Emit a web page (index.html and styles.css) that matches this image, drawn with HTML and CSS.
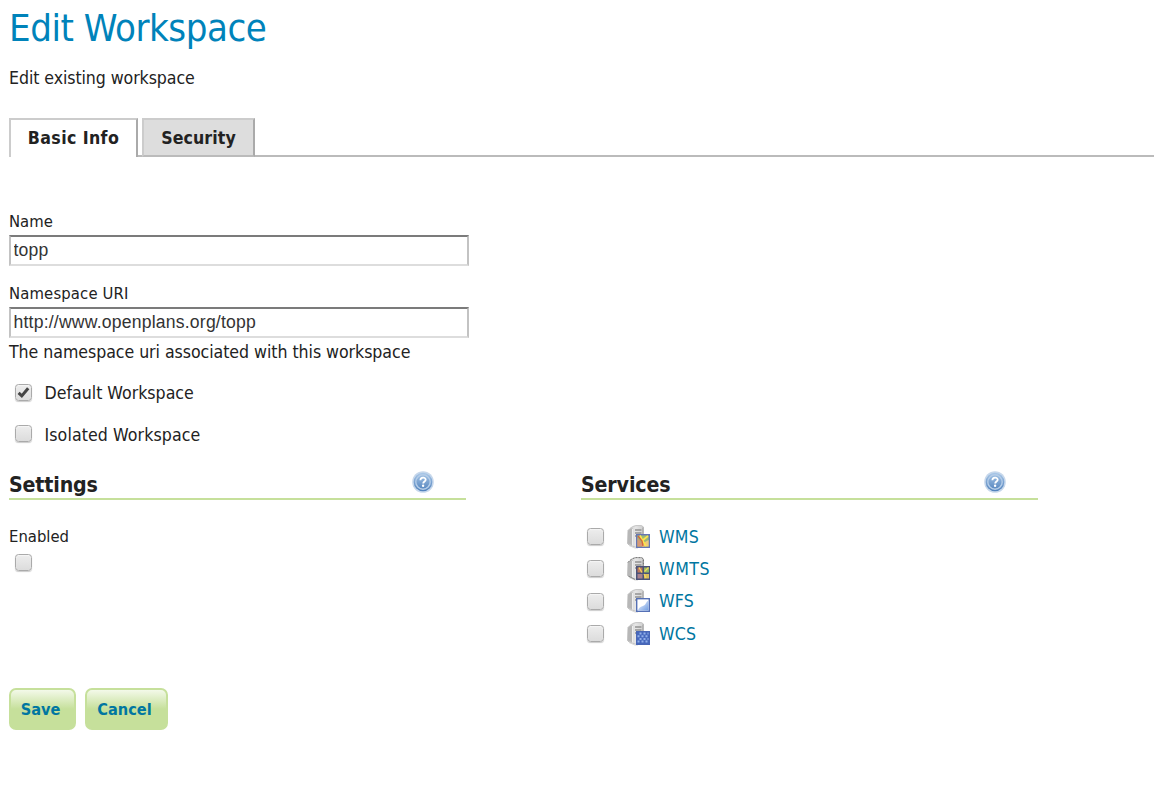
FILE: index.html
```html
<!DOCTYPE html>
<html lang="en">
<head>
<meta charset="utf-8">
<title>Edit Workspace</title>
<link rel="stylesheet" href="styles.css">
</head>
<body>
<svg class="defs" width="0" height="0" aria-hidden="true">
  <defs>
    <linearGradient id="blue" x1="0" y1="0" x2="0" y2="1"><stop offset="0" stop-color="#a9c8e8"/><stop offset="1" stop-color="#4f80bb"/></linearGradient>
    <linearGradient id="metal" x1="0" y1="0" x2="1" y2="0"><stop offset="0" stop-color="#c6c6c6"/><stop offset=".5" stop-color="#e6e6e6"/><stop offset="1" stop-color="#cfcfcf"/></linearGradient>
    <linearGradient id="sky" x1="0" y1="0" x2="1" y2="1"><stop offset=".2" stop-color="#dce8fb"/><stop offset="1" stop-color="#6f9be0"/></linearGradient>
    <symbol id="help" viewBox="0 0 22 22">
      <circle cx="11" cy="11" r="10.8" fill="#c6d7eb"/>
      <circle cx="11" cy="11" r="9.3" fill="url(#blue)"/>
      <circle cx="11" cy="11" r="7.2" fill="none" stroke="#b5cde8" stroke-width="1.4"/>
      <path d="M8.4 9.3c0-3.5 5.300-3.5 5.300-.5 0 1.800-2.500 1.800-2.500 3.700" fill="none" stroke="#fff" stroke-width="1.8"/>
      <circle cx="11.1" cy="14.8" r="1.2" fill="#fff"/>
    </symbol>
    <symbol id="server" viewBox="0 0 24 24">
      <path d="M1 5.500C3 3 6 1 9 .6h5.500L16.500 2v17l-7 3.500-7.500-2.500-1.500-1.500z" fill="url(#metal)" stroke="#b9b9b9" stroke-width=".8"/>
      <path d="M1 6C2 4.500 3.500 3.500 5.500 3v17.500L1 18.500z" fill="#b7b7b7"/>
      <path d="M5.500 4v16.500" stroke="#eee" stroke-width="1"/>
      <path d="M8 5h6.500M8 8h6.500M8 11h3" stroke="#929292" stroke-width="1.3"/>
      <path d="M15.800 2.500V10" stroke="#a6a6a6" stroke-width="1"/>
      <path d="M2 20.500 8 23h3" fill="none" stroke="#d5d5d5"/>
    </symbol>
  </defs>
</svg>
<main class="page">
  <h1 class="title">Edit Workspace</h1>
  <p class="subtitle">Edit existing workspace</p>
  <nav class="tabs">
    <a class="tab tab-active"><span>Basic Info</span></a>
    <div class="tab-gap"></div>
    <a class="tab tab-security"><span>Security</span></a>
    <div class="tab-rule"></div>
  </nav>
  <form class="form">
    <label class="label label-name" for="name">Name</label>
    <input class="field" id="name" type="text" value="topp">
    <label class="label label-uri" for="uri">Namespace URI</label>
    <input class="field" id="uri" type="text" value="http://www.openplans.org/topp">
    <p class="hint">The namespace uri associated with this workspace</p>
    <label class="option"><span class="check"><svg viewBox="0 0 15 15"><path d="M2.600 7.900 5.800 10.900 12.200 3.200" fill="none" stroke="#444" stroke-width="3"/></svg></span><span>Default Workspace</span></label>
    <label class="option option-last"><span class="check"></span><span class="option-isolated">Isolated Workspace</span></label>
    <div class="columns">
      <section class="column">
        <header class="heading"><h2>Settings</h2><svg class="help"><use href="#help"/></svg></header>
        <label class="enabled">Enabled</label>
        <span class="check check-enabled"></span>
      </section>
      <section class="column">
        <header class="heading"><h2>Services</h2><svg class="help"><use href="#help"/></svg></header>
        <ul class="services">
          <li><span class="check"></span>
            <svg class="icon" viewBox="0 0 24 24"><use href="#server" width="24" height="24"/><rect x="9.700" y="9.700" width="12.600" height="12.600" fill="#9ab977" stroke="#6675b5" stroke-width="1.4"/><path d="M10.400 13v8.600h7z" fill="#d99775"/><path d="M15 21.600 18 17l3.600-2v6.600z" fill="#edc97b"/><path d="m13 10.500 2 4 4 6.500M16 15l5-4" fill="none" stroke="#ffe34d" stroke-width="1.7"/><path d="m11 11 4 5 1 5" fill="none" stroke="#d8643d" stroke-width="1.3"/></svg>
            <a>WMS</a></li>
          <li><span class="check"></span>
            <svg class="icon" viewBox="0 0 24 24"><use href="#server" width="24" height="24"/><path d="M1 5.500C3 3 6 1 9 .6h5.500L16.500 2v7" fill="none" stroke="#777" stroke-dasharray="2 1"/><path d="M1.500 19 8 22.500" stroke="#888"/><rect x="9" y="9" width="14" height="14" fill="#4b5279"/><path d="M10.500 10.500h5v5h-5z" fill="#bf795d"/><path d="M17 10.500h5v5h-5z" fill="#93b965"/><path d="M10.500 17h5v4.500h-5z" fill="#a9828d"/><path d="M17 17h5v4.500h-5z" fill="#d9bc5e"/><path d="m12 10.500 3 5M17.500 14.500l4-4M17 17l2 4" stroke="#f5d660" stroke-width="1.3"/></svg>
            <a class="wmts">WMTS</a></li>
          <li><span class="check"></span>
            <svg class="icon" viewBox="0 0 24 24"><use href="#server" width="24" height="24"/><rect x="9.700" y="9.700" width="12.600" height="12.600" fill="#fff" stroke="#5570b5" stroke-width="1.4"/><path d="M11 21.500c1-4 4-4 6-5 2-1 2-4 4.500-5v10z" fill="url(#sky)"/></svg>
            <a>WFS</a></li>
          <li><span class="check"></span>
            <svg class="icon" viewBox="0 0 24 24"><use href="#server" width="24" height="24"/><rect x="9.700" y="9.700" width="12.600" height="12.600" fill="#4668bd" stroke="#4866b6" stroke-width="1.4"/><path d="M12.500 11.500h9M10.500 14.200h11M12.500 16.900h9M10.500 19.600h11" stroke="#91afe9" stroke-width="2" stroke-dasharray="2 2"/></svg>
            <a>WCS</a></li>
        </ul>
      </section>
    </div>
    <div class="actions">
      <button class="button" type="button">Save</button>
      <button class="button cancel" type="button">Cancel</button>
    </div>
  </form>
</main>
</body>
</html>
```
FILE: styles.css
```css
* { box-sizing: border-box; }
body {
  margin: 0;
  overflow: hidden;
  background: #fff;
  color: #222;
  font: 17.6px/20px "DejaVu Sans Condensed", "DejaVu Sans", sans-serif;
  font-stretch: condensed;
}
h1, h2, p, ul { margin: 0; padding: 0; }
.defs { display: block; height: 0; }
.page { padding: 8px 0 0 9px; white-space: nowrap; }
.title { height: 40px; color: #0083ba; font-size: 38px; font-weight: normal; line-height: 40px; letter-spacing: -.45px; }
.subtitle { margin-top: 20px; height: 20px; letter-spacing: -.08px; }
.tabs { display: flex; height: 39px; margin-top: 30px; }
.tab {
  display: flex;
  align-items: center;
  justify-content: center;
  width: 129px;
  border: 2px solid #ccc;
  border-right-color: #aaa;
  font-weight: bold;
  letter-spacing: .1px;
}
.tab-active { border-bottom: 0; padding-bottom: 2px; letter-spacing: .4px; }
.tab-gap { width: 4px; border-bottom: 2px solid #bbb; }
.tab-security { width: 113px; background: #ddd; border-bottom-color: #bbb; }
.tab-rule { flex: 1; border-bottom: 2px solid #bbb; }
.form { display: flex; flex-direction: column; align-items: flex-start; }
.label { height: 20px; font-size: 16.5px; line-height: 21px; }
.label-name { margin-top: 54px; margin-bottom: 4px; }
.label-uri { margin-top: 17px; margin-bottom: 4px; letter-spacing: .15px; }
.field {
  width: 460px;
  height: 31px;
  padding: 0 2.5px 1px;
  border: 2px solid #c3c3c3;
  border-top-color: #7b7b7b;
  border-bottom-color: #ddd;
  color: #333;
  font: 17.6px "Liberation Sans", Arial, sans-serif;
  letter-spacing: .2px;
}
.hint { margin-top: 4px; height: 20px; letter-spacing: -.05px; }
.option { display: flex; align-items: center; gap: 12.5px; height: 20px; margin-top: 21px; padding-left: 6px; }
.check {
  display: block;
  flex: none;
  width: 17px;
  height: 17px;
  border: 1px solid #aaa;
  border-radius: 3.5px;
  background: linear-gradient(#ededed, #dcdcdc);
  box-shadow: 0 1px 1px #ccc, inset 0 1px 1px #f5f5f5;
}
.check svg { display: block; width: 15px; height: 15px; }
.option .check { margin-bottom: 1px; }
.option-last { margin-top: 22px; }
.option-last .check { margin-bottom: 3px; }
.option-isolated { letter-spacing: .1px; }
.columns { display: flex; gap: 115px; margin-top: 26px; height: 217px; }
.column { width: 457px; }
.heading { display: flex; justify-content: space-between; height: 29px; border-bottom: 2px solid #c6e09b; padding-right: 32px; }
.heading h2 { font-size: 21.2px; line-height: 28px; letter-spacing: -.15px; }
.help { width: 22px; height: 22px; }
.enabled { display: block; margin-top: 26px; font-size: 16.5px; line-height: 21px; }
.check-enabled { margin: 7px 0 0 6px; }
.services { list-style: none; margin-top: 20.4px; padding-left: 6px; }
.services li { display: flex; align-items: center; height: 32.4px; }
.icon { width: 24px; height: 24px; margin: 0 8px 0 23px; }
.services a { color: #0076a1; letter-spacing: .2px; }
.services .wmts { letter-spacing: .5px; }
.actions { display: flex; gap: 9px; }
.button {
  width: 67px;
  height: 42px;
  padding: 1px 4px 0 0;
  border: 2px solid #c6e09b;
  border-radius: 7px;
  background: linear-gradient(#f3f9e9, #c6e09b 50%);
  color: #0076a1;
  font: bold 16.2px "DejaVu Sans Condensed", "DejaVu Sans", sans-serif;
  font-stretch: condensed;
}
.cancel { width: 83px; }
```
